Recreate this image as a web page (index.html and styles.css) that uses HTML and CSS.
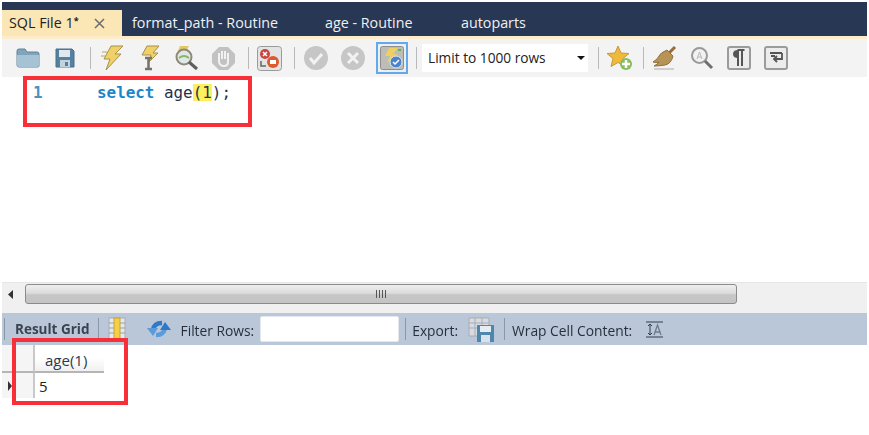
FILE: index.html
```html
<!DOCTYPE html>
<html lang="en">
<head>
<meta charset="utf-8">
<title>SQL File 1</title>
<link rel="stylesheet" href="styles.css">
</head>
<body>
<div class="app">
  <div class="tabs">
    <div class="tab active"><span>SQL File 1<sup class="star">*</sup></span>
      <svg class="close" width="11" height="11" viewBox="0 0 11 11"><path d="M1 1l9 9M10 1l-9 9" stroke="#6d6d6d" stroke-width="1.500" fill="none"/></svg>
    </div>
    <div class="tab t2">format_path - Routine</div>
    <div class="tab t3">age - Routine</div>
    <div class="tab t4">autoparts</div>
  </div>
  <div class="toolbar">
    <div class="btn"><svg width="24" height="20" viewBox="0 0 24 20"><path d="M1 3q0-2 2-2h6l2 3h10q2 0 2 2v12q0 1-2 1H3q-2 0-2-2z" fill="#7fa5bd" stroke="#5f8297"/><path d="M1 7h22v10q0 2-2 2H3q-2 0-2-2z" fill="#a6c3d5"/></svg></div>
    <div class="btn"><svg width="20" height="20" viewBox="0 0 20 20"><path d="M1 1h16l2 2v16H1z" fill="#55809f" stroke="#47708e"/><rect x="4" y="2" width="11" height="7" fill="#dfe8ee"/><rect x="5" y="12" width="10" height="7" fill="#c3d3de"/><rect x="10" y="14" width="3" height="4" fill="#55809f"/></svg></div>
    <div class="sep"></div>
    <div class="btn"><svg width="26" height="26" viewBox="0 0 26 26"><path d="M12 1h12l-8 8h6L7 25l4-11H5z" fill="#efd168" stroke="#a89148"/><path d="M3 7h5M2 11h4" stroke="#b5a468" fill="none"/></svg></div>
    <div class="btn"><svg width="26" height="26" viewBox="0 0 26 26"><path d="M11 1h12l-6 7h5L13 17l2-7H6z" fill="#efd168" stroke="#a89148"/><path d="M9 13h7M12.500 13v10M9 24h7" stroke="#77736a" stroke-width="2.500" fill="none"/></svg></div>
    <div class="btn"><svg width="28" height="26" viewBox="0 0 28 26"><path d="M8 1h9l-3 5h-8z" fill="#e4c765"/><circle cx="12" cy="12" r="7.500" fill="#dfe8e8" stroke="#8d8a78" stroke-width="2"/><path d="M7 13q5-4 10 0" stroke="#8fb45f" stroke-width="2" fill="none"/><path d="M17 17l8 7" stroke="#5f5f5f" stroke-width="3"/></svg></div>
    <div class="btn"><svg width="25" height="25" viewBox="0 0 25 25"><path d="M8 1h9l7 7v9l-7 7H8l-7-7V8z" fill="#c2c2c2"/><path d="M8 14V7M11 13V5M14 13V5M17 14V7M8 12v4q1 4 5 4t4-4v-5" stroke="#f2f2f2" stroke-width="2" fill="none"/></svg></div>
    <div class="sep narrow"></div>
    <div class="btn"><svg width="25" height="25" viewBox="0 0 25 25"><rect x=".5" y=".5" width="24" height="24" rx="3" fill="#e4e4e4" stroke="#9a9a9a"/><circle cx="8" cy="8" r="5" fill="#c9453f"/><path d="M6 6l4 4M10 6l-4 4" stroke="#fff" stroke-width="1.500"/><circle cx="16" cy="16" r="6" fill="#dc5a2c"/><rect x="13" y="14" width="6" height="4" fill="#fff"/><path d="M4 15v5h5" stroke="#666" fill="none" stroke-width="1.500"/></svg></div>
    <div class="sep"></div>
    <div class="btn"><svg width="24" height="24" viewBox="0 0 24 24"><circle cx="12" cy="12" r="12" fill="#c6c6c6"/><path d="M6 12l4 5 8-9" stroke="#f2f2f2" stroke-width="3" fill="none"/></svg></div>
    <div class="btn"><svg width="24" height="24" viewBox="0 0 24 24"><circle cx="12" cy="12" r="12" fill="#c6c6c6"/><path d="M7 7l10 10M17 7L7 17" stroke="#f2f2f2" stroke-width="3"/></svg></div>
    <div class="btn togglebtn"><div class="toggle"><svg width="24" height="24" viewBox="0 0 24 24"><rect x=".5" y=".5" width="23" height="23" rx="2" fill="#bdbdb5" stroke="#8d8d8d"/><path d="M9 2h9l-5 6h4L7 17l3-7H5z" fill="#edcf63"/><circle cx="16" cy="16" r="6" fill="#4b84c9" stroke="#dfe8f2"/><path d="M13 16l2 2 4-4" stroke="#fff" stroke-width="1.500" fill="none"/><rect x="18" y="3" width="3" height="2" fill="#66b34d"/></svg></div></div>
    <div class="sep tight"></div>
    <div class="limit"><span>Limit to 1000 rows</span><i class="caret"></i></div>
    <div class="sep limit-sep"></div>
    <div class="btn wide"><svg width="26" height="26" viewBox="0 0 26 26"><path d="M11 1l3 7 8 .5-6 5 2 8-7-4-7 4 2-8-6-5 8-.5z" fill="#f0b93a" stroke="#c69a3a"/><circle cx="19" cy="19" r="6" fill="#86bd5d"/><path d="M19 15v8M15 19h8" stroke="#fff" stroke-width="2.500"/></svg></div>
    <div class="sep flat"></div>
    <div class="btn"><svg width="26" height="26" viewBox="0 0 26 26"><path d="M17 8l6-6" stroke="#9a6b35" stroke-width="3"/><path d="M15 5l6 6q-2 8-8 9t-11 1q4-2 5-4-3 1-6 0 5-3 6-6t8-6z" fill="#b79455" stroke="#90703c"/><path d="M2 24h20" stroke="#cfcfcf" stroke-width="2"/></svg></div>
    <div class="btn"><svg width="24" height="24" viewBox="0 0 24 24"><circle cx="9.500" cy="9.500" r="7.500" fill="#f2f2f2" stroke="#9a9a9a" stroke-width="2"/><path d="M7 13l2.500-7 2.500 7M8 11h3" stroke="#b8b8b8" fill="none"/><path d="M15 15l7 7" stroke="#6f6f6f" stroke-width="3"/></svg></div>
    <div class="btn"><div class="key"><svg width="12" height="18" viewBox="0 0 12 18"><path d="M4.500 1h7M5 1v16M9 1v16" stroke="#555" stroke-width="2" fill="none"/><path d="M5 1Q0 1 0 5t5 4z" fill="#555"/></svg></div></div>
    <div class="btn"><div class="key"><svg width="14" height="14" viewBox="0 0 14 14"><path d="M1 2h12M13 2v6H5M8 5L5 8l3 3M2 5h4" stroke="#555" stroke-width="1.800" fill="none"/></svg></div></div>
  </div>
  <div class="editor">
    <span class="lineno">1</span><code class="sql"><b>select</b> age<span class="hl">(1</span>);</code>
    <div class="redbox box1"></div>
  </div>
  <div class="hscroll">
    <svg class="arrow" width="6" height="9" viewBox="0 0 6 9"><path d="M5 0v9L0 4.500z" fill="#333"/></svg>
    <div class="thumb"><span class="grip"></span></div>
  </div>
  <div class="gap"></div>
  <div class="resultbar">
    <div class="rsep"></div>
    <strong class="rg">Result Grid</strong>
    <div class="rsep"></div>
    <svg class="gridicon" width="18" height="24" viewBox="0 0 18 24"><rect x="1" y="1" width="16" height="22" fill="#e5e9ee" stroke="#a8aeb5"/><rect x="6" y="1" width="6" height="22" fill="#f5cf45" stroke="#c9a530"/><path d="M1 6h5M1 11h5M1 16h5M12 6h5M12 11h5M12 16h5" stroke="#9aa1a9"/></svg>
    <svg class="refresh" width="24" height="22" viewBox="0 0 24 22"><path d="M6 12q1-7 9-7" stroke="#2f79c6" stroke-width="4.500" fill="none"/><path d="M0 10h11l-5 8z" fill="#5b9bdc"/><path d="M18 10q-1 7-9 7" stroke="#5b9bdc" stroke-width="4.500" fill="none"/><path d="M24 12H13l5-8z" fill="#2f79c6"/></svg>
    <span class="lbl filter">Filter Rows:</span>
    <div class="search"></div>
    <div class="rsep"></div>
    <span class="lbl export">Export:</span>
    <svg class="saveicon" width="27" height="25" viewBox="0 0 27 25"><path d="M1 1h20v18H1z" fill="#d8dce2" stroke="#a7adb5"/><path d="M1 6h20M1 11h20M7 1v18M14 1v18" stroke="#a7adb5"/><path d="M9 8h17v17H9z" fill="#4f86ad"/><rect x="12" y="9" width="11" height="6" fill="#e5edf3"/><rect x="13" y="18" width="9" height="7" fill="#d7e2ea"/></svg>
    <div class="rsep"></div>
    <span class="lbl wrap">Wrap Cell Content:</span>
    <svg class="wrapicon" width="17" height="17" viewBox="0 0 17 17"><path d="M0 1h17M0 16h17" stroke="#333f50"/><path d="M4 3v11M2 5l2-2 2 2M2 12l2 2 2-2" stroke="#333f50" fill="none"/><path d="M8 14l3.500-10L15 14M9 11h5" stroke="#6f7b8c" fill="none" stroke-width="1.300"/></svg>
  </div>
  <div class="grid">
    <div class="gridhead"><div class="corner"></div><div class="col">age(1)</div></div>
    <div class="gridrow"><div class="marker"><i></i></div><div class="cell">5</div></div>
    <div class="redbox box2"></div>
  </div>
</div>
</body>
</html>
```

FILE: styles.css
```css
* { box-sizing: border-box; }
html, body { margin: 0; height: 100%; background: #fff; overflow: hidden; }
body { font-family: "Open Sans", "Liberation Sans", sans-serif; color: #222; }
.app { width: 865px; margin: 2px 0 0 2px; filter: blur(.45px); }

.tabs { height: 34px; background: #283753; display: flex; align-items: flex-end; }
.tab { height: 26px; color: #eef1f5; font-size: 14.300px; line-height: 26px; white-space: nowrap; }
.tab.active { width: 120px; background: #fbe6b5; color: #222; padding-left: 7px; display: flex; align-items: center; }
.star { font-size: 9px; line-height: 0; vertical-align: 4px; font-weight: 700; }
.close { margin-left: 15px; flex: none; }
.t2 { margin-left: 10px; width: 193px; }
.t3 { width: 136px; }

.toolbar { height: 41px; background: #f3f3f3; border-top: 3px solid #fdeccb; display: flex; align-items: center; }
.btn { width: 37px; height: 32px; flex: none; display: flex; align-items: center; justify-content: center; }
.btn:first-child { margin-left: 7.500px; }
.sep { width: 10px; height: 22px; flex: none; }
.sep::after { content: ""; display: block; width: 1px; height: 100%; margin-left: 6px; background: #b9b9b9; }
.sep.narrow { width: 9px; }
.togglebtn { width: 39px; justify-content: flex-end; padding-right: 2.500px; }
.sep.tight { width: 11.500px; }
.sep.tight::after { margin-left: 5.500px; }
.toggle { width: 32px; height: 32px; border: 2px solid #67a9e6; background: #e8f0f7; display: flex; align-items: center; justify-content: center; }
.key { width: 24px; height: 24px; border: 2px solid #9b9b9b; border-radius: 3px; background: #ececec; display: flex; align-items: center; justify-content: center; }

.limit { width: 166px; height: 28px; flex: none; background: #fff; font-size: 13.700px; line-height: 28px; padding-left: 6px; display: flex; align-items: center; justify-content: space-between; color: #222; }
.caret { width: 0; height: 0; border: 4px solid transparent; border-top: 4px solid #111; margin: 4px 3px 0 0; }
.sep.limit-sep { width: 17px; }
.sep.limit-sep::after { margin-left: 10px; }
.wide { width: 30px; }
.sep.flat { width: 11.500px; }
.sep.flat::after { margin-left: 8px; }

.editor { height: 205px; background: #fff; position: relative; padding: 5px 0 0 31px; font-family: "DejaVu Sans Mono", monospace; font-size: 15.900px; line-height: 22px; display: flex; }
.lineno { color: #4a93c0; width: 64px; flex: none; font-weight: 700; }
.sql { font-family: inherit; color: #26324a; }
.sql b { font-weight: 700; color: #1c86c9; }
.hl { display: inline-block; background: #fdf05e; line-height: 17px; }

.redbox { position: absolute; border: 4.500px solid #f72f38; background: transparent; }
.box1 { left: 21px; top: -1px; width: 229px; height: 51px; }
.box2 { left: 10px; top: -7px; width: 116px; height: 67px; }

.hscroll { height: 23px; background: #f0f0f0; border-top: 1px solid #e6e6e6; display: flex; align-items: center; padding-left: 6px; }
.arrow { flex: none; }
.thumb { width: 712px; height: 20px; margin-left: 11px; border: 1px solid #8b8b8b; border-radius: 3px; background: linear-gradient(#efefef, #dcdcdc 45%, #c6c6c6 55%, #c4c4c4); display: flex; align-items: center; justify-content: center; }
.grip { width: 10px; height: 8px; background: repeating-linear-gradient(90deg, #555 0 1px, transparent 1px 3px); }
.gap { height: 8px; background: #f0f0f0; }

.resultbar { height: 32px; background: #b9c7d9; display: flex; align-items: center; padding-left: 2px; font-size: 13.800px; color: #28303c; }
.rsep { width: 1px; height: 22px; background: #8a97a8; flex: none; }
.rg { margin: 0 8px 0 10px; font-size: 13.500px; font-weight: 700; color: #3a4350; }
.gridicon { margin-left: 9px; flex: none; }
.refresh { margin-left: 21px; flex: none; }
.lbl { white-space: nowrap; padding-top: 2px; }
.filter { margin-left: 10px; }
.search { width: 139px; height: 26px; margin: 0 6px 0 6px; background: #fff; border: 1px solid #e4e8ee; border-radius: 2px; flex: none; }
.export { margin-left: 6px; }
.saveicon { margin: 0 9px 0 10px; flex: none; }
.wrap { margin-left: 7px; }
.wrapicon { margin-left: 14px; flex: none; }

.grid { position: relative; background: #fff; font-size: 15px; color: #222; height: 88px; }
.gridhead { display: flex; height: 28px; }
.corner { width: 33px; background: #f5f5f5; border-right: 2px solid #c9c9c9; border-bottom: 2px solid #b5b5b5; }
.col { width: 69px; background: linear-gradient(#fff 50%, #f0f0f0); border-bottom: 2px solid #b5b5b5; line-height: 30px; padding-left: 10px; color: #2a3a50; }
.gridrow { display: flex; height: 25px; }
.marker { width: 33px; background: #f5f5f5; border-right: 2px solid #c9c9c9; display: flex; align-items: center; padding-left: 6px; }
.marker i { width: 0; height: 0; border: 5px solid transparent; border-left: 4px solid #333; }
.cell { padding-left: 4px; line-height: 26px; }
```
